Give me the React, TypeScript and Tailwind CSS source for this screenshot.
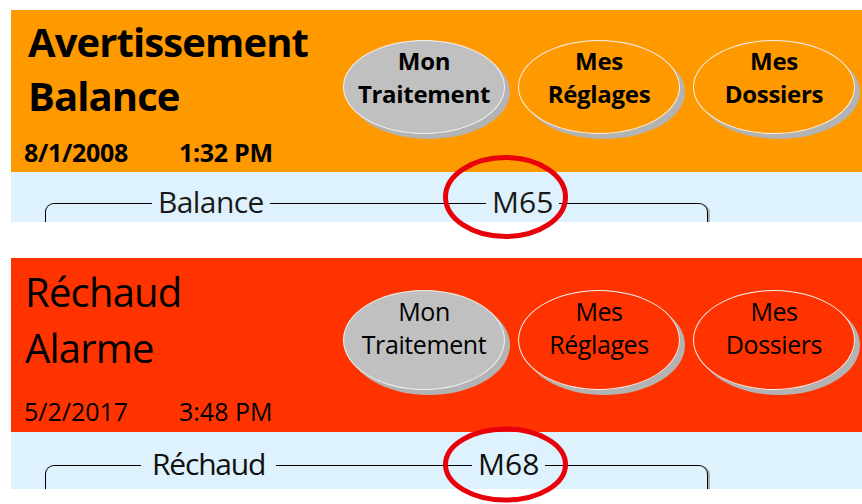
import React from "react";

type PanelProps = {
  headerCls: string;
  blueCls: string;
  weight: string;
  titleCls: string;
  title: [string, string];
  dateCls: string;
  date: string;
  time: string;
  ellipseRowCls: string;
  ellipseCls: string;
  btnTextCls: string;
  boxCls: string;
  label: string;
  labelCls: string;
  code: string;
  codeCls: string;
};

function Oval({ cls, text, lines }: { cls: string; text: string; lines: [string, string] }) {
  return (
    <div className={cls}>
      <div className={text}>
        <div>{lines[0]}</div>
        <div>{lines[1]}</div>
      </div>
    </div>
  );
}

function Panel(p: PanelProps) {
  return (
    <div className="ml-[11px] w-[851px]">
      <div className={p.headerCls}>
        <div className={"w-[332px] " + p.weight}>
          <div className={p.titleCls}>
            <div>{p.title[0]}</div>
            <div>{p.title[1]}</div>
          </div>
          <div className={p.dateCls}>
            <span className="inline-block w-[155px]">{p.date}</span>
            <span>{p.time}</span>
          </div>
        </div>
        <div className={p.ellipseRowCls}>
          <Oval
            cls={p.ellipseCls + " bg-[#c0c0c0]"}
            text={p.btnTextCls}
            lines={["Mon", "Traitement"]}
          />
          <Oval cls={p.ellipseCls} text={p.btnTextCls} lines={["Mes", "Réglages"]} />
          <Oval cls={p.ellipseCls} text={p.btnTextCls} lines={["Mes", "Dossiers"]} />
        </div>
      </div>
      <div className={p.blueCls}>
        <div className={p.boxCls}>
          <div className={p.labelCls}>{p.label}</div>
          <div className={p.codeCls}>{p.code}</div>
        </div>
      </div>
    </div>
  );
}

export default function App() {
  return (
    <div
      className="relative w-[862px] h-[504px] bg-white overflow-hidden text-black"
      style={{ fontFamily: '"Open Sans", "Noto Sans", sans-serif' }}
    >
      <div className="pt-[10px]">
        <Panel
          headerCls="flex h-[162px] bg-[#ff9900]"
          blueCls="h-[50px] bg-[#def2fd] overflow-hidden pl-[34px]"
          weight="font-bold"
          titleCls="pt-[5px] pl-[17px] text-[40px] leading-[54px] tracking-[-0.9px]"
          title={["Avertissement", "Balance"]}
          dateCls="mt-[14px] pl-[13px] text-[25px] leading-[30px] tracking-[-0.3px]"
          date="8/1/2008"
          time="1:32 PM"
          ellipseRowCls="flex gap-[13px] pt-[30px]"
          ellipseCls="w-[162px] h-[94px] rounded-[50%] border border-[#f2f2f2] shadow-[5px_5px_0_#b3b3b3]"
          btnTextCls="pt-[3px] text-center font-bold text-[24px] leading-[33px] tracking-[-0.3px]"
          boxCls="relative mt-[31px] w-[663px] h-[60px] border-t border-x border-black rounded-t-[9px] shadow-[2px_1px_0_#b0b0b0]"
          label="Balance"
          labelCls="absolute left-[106px] top-[-17px] h-[30px] px-[6px] bg-[#def2fd] text-[30px] leading-[30px] tracking-[-0.6px] text-[#1a1a1a]"
          code="M65"
          codeCls="absolute left-[440px] top-[-17px] h-[30px] px-[6px] bg-[#def2fd] text-[30px] leading-[30px] text-[#1a1a1a]"
        />
        <div className="h-[36px]" />
        <Panel
          headerCls="flex h-[174px] bg-[#ff3300]"
          blueCls="h-[57px] bg-[#def2fd] overflow-hidden pl-[34px]"
          weight="font-normal"
          titleCls="pt-[6px] pl-[14px] text-[40px] leading-[56px] tracking-[-0.8px]"
          title={["Réchaud", "Alarme"]}
          dateCls="mt-[20px] pl-[13px] text-[25px] leading-[30px]"
          date="5/2/2017"
          time="3:48 PM"
          ellipseRowCls="flex gap-[13px] pt-[32px]"
          ellipseCls="w-[162px] h-[100px] rounded-[50%] border border-[#f2f2f2] shadow-[5px_5px_0_#b3b3b3]"
          btnTextCls="pt-[4px] text-center font-normal text-[25px] leading-[33px] tracking-[-0.4px]"
          boxCls="relative mt-[33px] w-[663px] h-[60px] border-t border-x border-black rounded-t-[9px] shadow-[2px_1px_0_#b0b0b0]"
          label="Réchaud"
          labelCls="absolute left-[95px] top-[-17px] h-[30px] px-[11px] bg-[#def2fd] text-[30px] leading-[30px] tracking-[-1.2px] text-[#111]"
          code="M68"
          codeCls="absolute left-[426px] top-[-17px] h-[30px] px-[6px] bg-[#def2fd] text-[30px] leading-[30px] text-[#111]"
        />
      </div>
      <svg
        className="absolute left-0 top-0 pointer-events-none"
        width="862"
        height="504"
        viewBox="0 0 862 504"
      >
        <ellipse cx="505.5" cy="197" rx="60" ry="39.5" fill="none" stroke="#e8000a" strokeWidth="5" />
        <ellipse cx="505.5" cy="464.5" rx="60" ry="35.5" fill="none" stroke="#e8000a" strokeWidth="5" />
      </svg>
    </div>
  );
}
